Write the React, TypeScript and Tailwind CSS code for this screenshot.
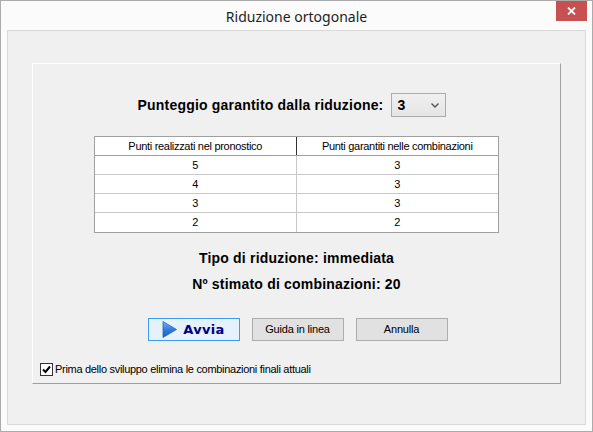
import React from 'react';

const rows = [
  ['5', '3'],
  ['4', '3'],
  ['3', '3'],
  ['2', '2'],
];

const ui = "font-['Liberation_Sans',Arial,sans-serif]";

export default function App() {
  return (
    <div className="w-[593px] h-[432px] bg-[#fbfbfb] border border-[#ababab] flex flex-col overflow-hidden">
      {/* title bar */}
      <div className="h-[29px] shrink-0 relative flex items-center justify-center">
        <span className="font-['Noto_Sans',sans-serif] text-[14px] text-[#1e1e1e] mt-[2px]">Riduzione ortogonale</span>
        <div className="absolute right-[5px] top-0 w-[31px] h-[20px] bg-[#c75050] flex items-center justify-center">
          <svg width="9" height="8" viewBox="0 0 9 8">
            <path d="M1 0.5 L8 7.5 M8 0.5 L1 7.5" stroke="white" strokeWidth="1.8" />
          </svg>
        </div>
      </div>

      {/* client area */}
      <div className="flex-1 mx-[6px] mb-[6px] border border-[#d9d9d9] bg-[#f0f0f0] pt-[32px] pl-[24px] pr-[24px] pb-[40px]">
        <div className="h-[321px] border-t border-l border-t-white border-l-white border-r border-b border-r-[#a0a0a0] border-b-[#a0a0a0] flex flex-col">
          {/* punteggio row */}
          <div className="mt-[29px] flex items-center justify-center gap-[8px] pr-[9px]">
            <span className={`${ui} font-bold text-[14px] tracking-[0.2px] text-black`}>Punteggio garantito dalla riduzione:</span>
            <div className="w-[55px] h-[24px] border border-[#acacac] bg-gradient-to-b from-[#f0f0f0] to-[#e5e5e5] flex items-center justify-between pl-[5px] pr-[6px]">
              <span className={`${ui} font-bold text-[14px] text-black`}>3</span>
              <svg width="8" height="5" viewBox="0 0 8 5">
                <path d="M0.5 0.5 L4 4 L7.5 0.5" stroke="#555" strokeWidth="1.4" fill="none" />
              </svg>
            </div>
          </div>

          {/* table */}
          <div className={`${ui} mt-[19px] self-center w-[405px] border border-[#a0a0a0] bg-white text-[11px] tracking-[-0.3px] text-black`}>
            <div className="grid grid-cols-2 h-[19px] border-b border-[#a0a0a0]">
              <div className="flex items-center justify-center border-r border-[#333]">Punti realizzati nel pronostico</div>
              <div className="flex items-center justify-center">Punti garantiti nelle combinazioni</div>
            </div>
            {rows.map((r, i) => (
              <div key={i} className={`grid grid-cols-2 h-[19px] ${i < rows.length - 1 ? 'border-b border-[#c8c8c8]' : ''}`}>
                <div className="flex items-center justify-center border-r border-[#c8c8c8]">{r[0]}</div>
                <div className="flex items-center justify-center">{r[1]}</div>
              </div>
            ))}
          </div>

          {/* info */}
          <div className={`${ui} font-bold text-[14px] tracking-[0.2px] text-black flex flex-col items-center mt-[17px] gap-[9px]`}>
            <span className="h-[17px] leading-[17px]">Tipo di riduzione: immediata</span>
            <span className="h-[17px] leading-[17px]">Nº stimato di combinazioni: 20</span>
          </div>

          {/* buttons */}
          <div className="mt-[25px] flex justify-center gap-[12px] pl-[2px]">
            <button className="w-[92px] h-[23px] border border-[#3c9bf3] bg-[#e5f1fb] flex items-center justify-center gap-[6px]">
              <svg width="15" height="17" viewBox="0 0 15 17">
                <defs>
                  <linearGradient id="pl" x1="0" y1="0" x2="0" y2="1">
                    <stop offset="0" stopColor="#7bb3f0" />
                    <stop offset="0.5" stopColor="#2f7de0" />
                    <stop offset="1" stopColor="#1d5fc0" />
                  </linearGradient>
                </defs>
                <path d="M1 0.5 L14.5 8.5 L1 16.5 Z" fill="url(#pl)" stroke="#2a66b8" strokeWidth="0.8" />
              </svg>
              <span className="font-['DejaVu_Sans',Verdana,sans-serif] font-bold text-[13px] tracking-[0.3px] text-[#000080]">Avvia</span>
            </button>
            <button className={`${ui} w-[92px] h-[23px] border border-[#adadad] bg-[#e1e1e1] text-[11px] tracking-[-0.2px] text-black`}>Guida in linea</button>
            <button className={`${ui} w-[92px] h-[23px] border border-[#adadad] bg-[#e1e1e1] text-[11px] tracking-[-0.2px] text-black`}>Annulla</button>
          </div>

          {/* checkbox */}
          <div className="mt-[20px] ml-[7px] flex items-center gap-[2px]">
            <div className="w-[13px] h-[13px] border border-[#333] bg-white flex items-center justify-center">
              <svg width="9" height="9" viewBox="0 0 9 9">
                <path d="M1 4.5 L3.5 7 L8 1.5" stroke="black" strokeWidth="2" fill="none" />
              </svg>
            </div>
            <span className={`${ui} text-[11px] tracking-[-0.3px] text-black`}>Prima dello sviluppo elimina le combinazioni finali attuali</span>
          </div>
        </div>
      </div>
    </div>
  );
}
